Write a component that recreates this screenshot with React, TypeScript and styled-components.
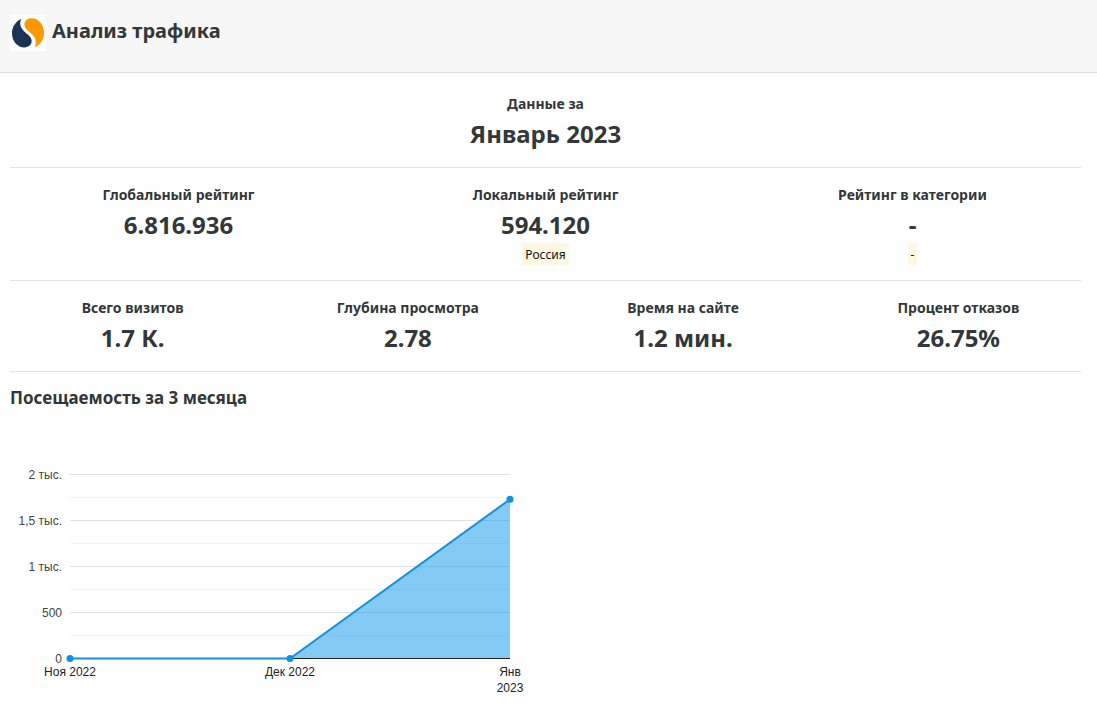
import React from "react";
import styled, { createGlobalStyle } from "styled-components";

const GlobalStyle = createGlobalStyle`
  *, *::before, *::after { box-sizing: border-box; }
  body {
    margin: 0;
    background: #fff;
    color: #32373a;
    font-family: "Noto Sans", "Open Sans", sans-serif;
    overflow-x: hidden;
  }
`;

const Header = styled.header`
  display: flex;
  align-items: flex-start;
  gap: 6px;
  min-height: 73px;
  padding: 15px 10px;
  background: #f7f7f7;
  border-bottom: 1px solid #ddd;
`;

const Logo = styled.svg`
  flex: none;
  width: 36px;
  height: 36px;
  background: #fff;
`;

const Title = styled.h1`
  margin: 0;
  font-size: 20px;
  line-height: 32px;
  font-weight: 700;
`;

const Content = styled.main`
  padding: 4px 16px 20px 10px;
`;

const StatRow = styled.section`
  padding: 17px 0 18px;
  border-bottom: 1px solid #e2e2e2;
`;

const Columns = styled.dl<{ $count: number }>`
  display: grid;
  grid-template-columns: repeat(${(p) => p.$count}, 1fr);
  margin: 0 -15px;
`;

const Stat = styled.div`
  display: flex;
  flex-direction: column;
  align-items: center;
  text-align: center;
`;

const StatLabel = styled.dt`
  font-size: 14px;
  line-height: 20px;
  font-weight: 700;
`;

const StatValue = styled.dd`
  margin: 5px 0 0;
  font-size: 24px;
  line-height: 30px;
  font-weight: 700;
`;

const Badge = styled.dd`
  margin: 3px 0 -3px;
  padding: 2px 3px 0;
  background: #fcf8e3;
  color: #111;
  font-size: 12px;
  line-height: 20px;
`;

const SectionTitle = styled.h2`
  margin: 14px 0 0;
  font-size: 17px;
  line-height: 24px;
  font-weight: 700;
`;

const Chart = styled.svg`
  display: block;
  width: 540px;
  max-width: 100%;
  height: auto;
  margin: 30px 0 0;
  font-family: "Liberation Sans", Arial, sans-serif;
  font-size: 12px;
`;

type StatItem = { label: string; value: string; note?: string };

const rows: StatItem[][] = [
  [{ label: "Данные за", value: "Январь 2023" }],
  [
    { label: "Глобальный рейтинг", value: "6.816.936" },
    { label: "Локальный рейтинг", value: "594.120", note: "Россия" },
    { label: "Рейтинг в категории", value: "-", note: "-" },
  ],
  [
    { label: "Всего визитов", value: "1.7 К." },
    { label: "Глубина просмотра", value: "2.78" },
    { label: "Время на сайте", value: "1.2 мин." },
    { label: "Процент отказов", value: "26.75%" },
  ],
];

const ticks = ["0", "500", "1 тыс.", "1,5 тыс.", "2 тыс."];
const months = [
  { lines: ["Ноя 2022"], visits: 0 },
  { lines: ["Дек 2022"], visits: 0 },
  { lines: ["Янв", "2023"], visits: 1730 },
];

const LEFT = 60;
const RIGHT = 500;
const BASE = 218;
const STEP = 46;

function VisitsChart() {
  const points = months.map((m, i) => ({
    x: LEFT + (i * (RIGHT - LEFT)) / (months.length - 1),
    y: BASE - (m.visits / 500) * STEP,
  }));
  const line = points.map((p) => `${p.x},${p.y}`).join(" ");
  return (
    <Chart viewBox="0 0 540 260" role="img" aria-label="Посещаемость за 3 месяца">
      {ticks.map((tick, i) => (
        <g key={tick}>
          {i > 0 && (
            <>
              <rect x={LEFT} y={BASE - i * STEP} width={RIGHT - LEFT} height="1" fill="#e0e0e0" />
              <rect x={LEFT} y={BASE - i * STEP + STEP / 2} width={RIGHT - LEFT} height="1" fill="#f2f2f2" />
            </>
          )}
          <text x={LEFT - 8} y={BASE - i * STEP + 5} textAnchor="end" fill="#444">
            {tick}
          </text>
        </g>
      ))}
      <rect x={LEFT} y={BASE} width={RIGHT - LEFT} height="1" fill="#222" />
      <polygon points={`${line} ${RIGHT},${BASE} ${LEFT},${BASE}`} fill="#0795e9" fillOpacity="0.5" />
      <polyline points={line} transform="translate(0 .5)" fill="none" stroke="#1490dc" strokeWidth="2" />
      {points.map((p, i) => (
        <g key={months[i].lines[0]}>
          <circle cx={p.x} cy={p.y + 0.5} r="3.5" fill="#0d92e6" />
          <text textAnchor="middle" fill="#222">
            {months[i].lines.map((text, n) => (
              <tspan key={text} x={p.x} y={BASE + 18 + n * 16}>
                {text}
              </tspan>
            ))}
          </text>
        </g>
      ))}
    </Chart>
  );
}

export default function App() {
  return (
    <>
      <GlobalStyle />
      <Header>
        <Logo viewBox="0 0 36 36" aria-hidden="true">
          <path
            d="M11.200 4C5.500 6.500 2 11.800 2 18.200 2 26.400 7.600 32.400 14.400 32.400c4.300 0 7.300-2.500 7.300-6.300 0-3.200-2-5-5.200-7.600C12.400 15 10.200 12.400 10.200 8.600c0-1.700.4-3.200 1-4.600z"
            fill="#1b3454"
          />
          <path
            d="M24.800 32.200C30.500 29.700 34 24.400 34 18 34 9.400 28.400 3.200 21.600 3.200c-4.300 0-7.200 2.500-7.200 6.300 0 3.200 2 5 5.200 7.600 4.100 3.500 6.200 6.100 6.200 9.900 0 1.900-.4 3.700-1 5.200z"
            fill="#ff9800"
          />
        </Logo>
        <Title>Анализ трафика</Title>
      </Header>
      <Content>
        {rows.map((items) => (
          <StatRow key={items[0].label}>
            <Columns $count={items.length}>
              {items.map((item) => (
                <Stat key={item.label}>
                  <StatLabel>{item.label}</StatLabel>
                  <StatValue>{item.value}</StatValue>
                  {item.note && <Badge>{item.note}</Badge>}
                </Stat>
              ))}
            </Columns>
          </StatRow>
        ))}
        <SectionTitle>Посещаемость за 3 месяца</SectionTitle>
        <VisitsChart />
      </Content>
    </>
  );
}
